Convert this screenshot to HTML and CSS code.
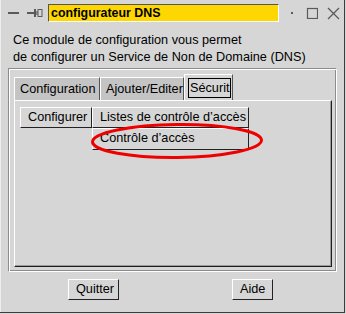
FILE: index.html
```html
<!DOCTYPE html>
<html lang="fr">
<head>
<meta charset="utf-8">
<link rel="stylesheet" href="styles.css">
</head>
<body>
<div class="window">
  <div class="titlebar">
    <svg class="ic-min" width="12" height="4" viewBox="0 0 12 4"><rect x="0" y="1" width="11" height="2" fill="#5a5a5a"/></svg>
    <svg class="ic-pin" width="16" height="10" viewBox="0 0 16 10"><rect x="0" y="4" width="7" height="2" fill="#5a5a5a"/><rect x="7" y="1" width="2" height="8" fill="#5a5a5a"/><rect x="9" y="3" width="2" height="4" fill="#8a8a8a"/><rect x="11" y="1.5" width="4" height="7" fill="none" stroke="#5a5a5a" stroke-width="1"/></svg>
    <div class="title">configurateur DNS</div>
    <div class="tb-right">
      <span class="dot"></span>
      <svg width="12" height="12" viewBox="0 0 12 12"><rect x="1.5" y="1.5" width="10" height="10" fill="none" stroke="#5a5a5a" stroke-width="1.2"/></svg>
      <svg width="13" height="13" viewBox="0 0 13 13"><path d="M1 1L12 12M12 1L1 12" stroke="#5a5a5a" stroke-width="1.3" fill="none"/></svg>
    </div>
  </div>
  <div class="desc">Ce module de configuration vous permet<br>de configurer un Service de Non de Domaine (DNS)</div>
  <div class="frame">
    <div class="tabs">
      <div class="tab tab-first">Configuration</div>
      <div class="tab">Ajouter/Editer</div>
      <div class="tab tab-active"><span class="focus">Sécurit</span></div>
    </div>
    <div class="panel">
      <div class="subgrid">
        <div class="btn">Configurer</div>
        <div class="btn">Listes de contrôle d’accès</div>
        <div class="btn btn-sub">Contrôle d’accès</div>
      </div>
      <svg class="ring" width="180" height="42" viewBox="0 0 180 42"><ellipse cx="89" cy="20" rx="84.5" ry="16.5" fill="none" stroke="#ee0000" stroke-width="3" transform="rotate(-0.6 89 20)"/></svg>
    </div>
  </div>
  <div class="actions">
    <div class="btn btn-quit">Quitter</div>
    <div class="btn btn-help">Aide</div>
  </div>
</div>
</body>
</html>
```
FILE: styles.css
```css
* { box-sizing: border-box; }
html, body { margin: 0; padding: 0; background: #d6d6d6; }
body { width: 346px; height: 314px; overflow: hidden; }
.window {
  position: relative;
  width: 346px;
  height: 314px;
  background: #d6d6d6;
  font-family: "Liberation Sans", Arial, sans-serif;
  font-size: 12.7px;
  color: #000;
  border-right: 1px solid #d6d6d6;
  border-bottom: 1px solid #d6d6d6;
  box-shadow: inset -1px -1px 0 #3c3c3c, inset 1px 0 0 #eeeeee;
  display: flex;
  flex-direction: column;
}
.titlebar {
  height: 26px;
  display: flex;
  align-items: center;
  padding-left: 8px;
}
.ic-min { margin-right: 7px; }
.ic-pin { margin-right: 5px; }
.title {
  width: 231px;
  height: 18px;
  background: #ffd700;
  border-top: 1px solid #555;
  border-left: 1px solid #555;
  border-right: 1px solid #fff;
  border-bottom: 1px solid #fff;
  font-weight: bold;
  font-size: 12.4px;
  line-height: 16px;
  padding-left: 2px;
}
.tb-right {
  display: flex;
  align-items: center;
  margin-left: 12px;
}
.dot { width: 2px; height: 2px; background: #5a5a5a; margin-right: 13px; }
.tb-right svg:nth-of-type(1) { margin-right: 9px; }
.desc {
  padding: 6px 0 0 13px;
  line-height: 17px;
  height: 40px;
}
.frame {
  margin: 2px 8px 0 8px;
  height: 204px;
  border: 1px solid;
  border-color: #8c8c8c #ffffff #ffffff #8c8c8c;
  box-shadow: inset 1px 1px 0 #ffffff, inset -1px -1px 0 #8c8c8c;
  padding: 5px 4px 4px 5px;
  display: flex;
  flex-direction: column;
}
.tabs {
  display: flex;
  align-items: flex-end;
  height: 26px;
}
.tab {
  height: 23px;
  background: #c4c4c4;
  border-top: 1px solid #fff;
  border-left: 1px solid #fff;
  border-right: 1px solid #555;
  padding: 4px 0 0 5px;
  line-height: 14px;
  white-space: nowrap;
}
.tab-first { width: 86px; }
.tab:nth-child(2) { width: 84px; }
.tab-active {
  height: 26px;
  width: 49px;
  background: #d6d6d6;
  padding: 3px 0 0 3px;
}
.focus {
  display: block;
  width: 43px;
  height: 20px;
  border: 1px solid #000;
  white-space: nowrap;
  padding: 2px 0 0 1px;
  line-height: 14px;
}
.panel {
  position: relative;
  flex: 1;
  border-top: 1px solid #fff;
  border-left: 1px solid #fff;
  border-right: 1px solid #1e1e1e;
  border-bottom: 1px solid #1e1e1e;
  box-shadow: inset -1px -1px 0 #9a9a9a;
  padding: 6px 0 0 5px;
}
.subgrid {
  display: grid;
  grid-template-columns: 72px 157px;
  grid-template-rows: 21px 22px;
}
.btn {
  background: #d6d6d6;
  border-top: 1px solid #fff;
  border-left: 1px solid #fff;
  border-right: 1px solid #222;
  border-bottom: 1px solid #222;
  line-height: 18px;
  padding-left: 7px;
  white-space: nowrap;
}
.btn-sub { grid-column: 2; padding-left: 7px; line-height: 19px; }
.ring {
  position: absolute;
  left: 73px;
  top: 20px;
}
.actions {
  display: flex;
  margin-top: 7px;
  padding-left: 68px;
}
.btn-quit { width: 51px; height: 21px; padding-left: 7px; }
.btn-help { width: 41px; height: 21px; margin-left: 113px; padding-left: 7px; }
```
